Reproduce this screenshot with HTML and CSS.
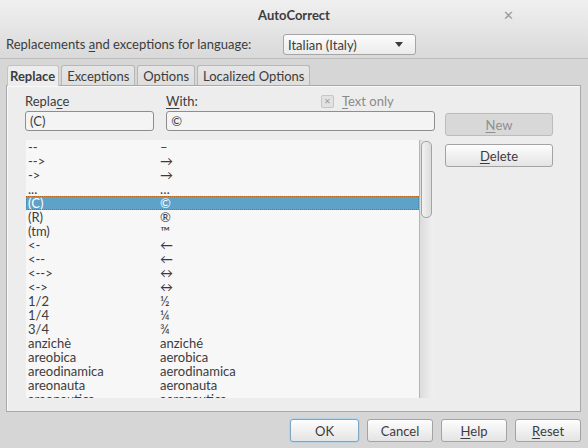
FILE: index.html
```html
<!DOCTYPE html>
<html>
<head>
<meta charset="utf-8">
<link rel="stylesheet" href="styles.css">
</head>
<body>
<div class="dialog">
  <div class="header">
    <div class="titlebar">
      <span class="title">AutoCorrect</span>
      <span class="close">✕</span>
    </div>
    <div class="langrow">
      <span class="langlabel">Replacements <u>a</u>nd exceptions for language:</span>
      <div class="combo"><span>Italian (Italy)</span><span class="arrow"></span></div>
    </div>
  </div>
  <div class="tabs">
    <div class="tab active">Replace</div>
    <div class="tab">Exceptions</div>
    <div class="tab">Options</div>
    <div class="tab">Localized Options</div>
  </div>
  <div class="panel">
    <div class="leftcol">
      <div class="labels">
        <span class="lbl-replace">Repla<u>c</u>e</span>
        <span class="lbl-with"><u>W</u>ith:</span>
        <span class="textonly"><span class="check">✕</span><span><u>T</u>ext only</span></span>
      </div>
      <div class="inputs">
        <div class="input in-replace">(C)</div>
        <div class="input in-with">©</div>
      </div>
      <div class="listbox">
        <div class="rows">
          <div class="row"><span class="c1">--</span><span>–</span></div>
          <div class="row"><span class="c1">--&gt;</span><span>→</span></div>
          <div class="row"><span class="c1">-&gt;</span><span>→</span></div>
          <div class="row"><span class="c1">...</span><span>…</span></div>
          <div class="row sel"><span class="c1">(C)</span><span>©</span></div>
          <div class="row"><span class="c1">(R)</span><span>®</span></div>
          <div class="row"><span class="c1">(tm)</span><span>™</span></div>
          <div class="row"><span class="c1">&lt;-</span><span>←</span></div>
          <div class="row"><span class="c1">&lt;--</span><span>←</span></div>
          <div class="row"><span class="c1">&lt;--&gt;</span><span>↔</span></div>
          <div class="row"><span class="c1">&lt;-&gt;</span><span>↔</span></div>
          <div class="row"><span class="c1">1/2</span><span>½</span></div>
          <div class="row"><span class="c1">1/4</span><span>¼</span></div>
          <div class="row"><span class="c1">3/4</span><span>¾</span></div>
          <div class="row"><span class="c1">anzichè</span><span>anziché</span></div>
          <div class="row"><span class="c1">areobica</span><span>aerobica</span></div>
          <div class="row"><span class="c1">areodinamica</span><span>aerodinamica</span></div>
          <div class="row"><span class="c1">areonauta</span><span>aeronauta</span></div>
          <div class="row"><span class="c1">areonautica</span><span>aeronautica</span></div>
        </div>
        <div class="scrollbar"><div class="thumb"></div></div>
      </div>
    </div>
    <div class="rightcol">
      <div class="btn disabled"><u>N</u>ew</div>
      <div class="btn"><u>D</u>elete</div>
    </div>
  </div>
  <div class="footer">
    <div class="btn fbtn default">OK</div>
    <div class="btn fbtn">Cancel</div>
    <div class="btn fbtn"><u>H</u>elp</div>
    <div class="btn fbtn"><u>R</u>eset</div>
  </div>
</div>
</body>
</html>
```
FILE: styles.css
```css
html, body {
  margin: 0;
  padding: 0;
}
body {
  width: 588px;
  height: 448px;
  overflow: hidden;
  background: #d6d6d6;
  font-family: "Lato", "Open Sans", sans-serif;
  font-size: 13px;
  color: #3c3c3c;
}
u { text-decoration: underline; text-underline-offset: 2px; }
.dialog {
  width: 588px;
  height: 448px;
  display: flex;
  flex-direction: column;
}
.header {
  height: 58px;
  background: linear-gradient(#f0f0f0, #d9d9d9);
  border-bottom: 1px solid #bdbdbd;
}
.titlebar {
  height: 30px;
  display: flex;
  align-items: center;
  justify-content: center;
  position: relative;
}
.title {
  font-weight: bold;
  font-size: 13px;
}
.close {
  position: absolute;
  left: 503px;
  top: 7px;
  font-size: 13px;
  color: #9a9a9a;
}
.langrow {
  height: 28px;
  display: flex;
  align-items: center;
  padding-left: 6px;
}
.langlabel {
  width: 277px;
}
.combo {
  width: 115px;
  height: 19px;
  border: 1px solid #a5a5a5;
  border-radius: 3px;
  background: linear-gradient(#fbfbfb, #ebebeb);
  display: flex;
  align-items: center;
  justify-content: space-between;
  padding: 0 12px 0 4px;
  box-sizing: content-box;
  margin-top: 1px;
}
.arrow {
  width: 0;
  height: 0;
  border-left: 4px solid transparent;
  border-right: 4px solid transparent;
  border-top: 5px solid #3c3c3c;
}
.tabs {
  display: flex;
  gap: 2px;
  padding-left: 7px;
  margin-top: 6px;
  height: 20px;
}
.tab {
  height: 19px;
  padding: 0 5px;
  border: 1px solid #b7b7b7;
  border-bottom: none;
  border-radius: 3px 3px 0 0;
  background: linear-gradient(#e6e6e6, #dedede);
  display: flex;
  align-items: center;
}
.tab.active {
  background: #ededed;
  font-weight: bold;
  height: 20px;
  position: relative;
  z-index: 1;
  padding: 0 3px 0 2px;
  border-color: #c4c4c4;
}
.panel {
  margin-left: 6px;
  width: 573px;
  height: 325px;
  border: 1px solid #a9a9a9;
  background: #ededed;
  display: flex;
  box-shadow: inset 1px 1px 0 #f8f8f8;
}
.leftcol {
  margin-left: 18px;
  width: 410px;
  display: flex;
  flex-direction: column;
}
.labels {
  height: 18px;
  margin-top: 6px;
  display: flex;
  align-items: center;
  position: relative;
}
.lbl-replace { width: 141px; }
.lbl-with { width: 155px; }
.textonly {
  display: flex;
  align-items: center;
  gap: 8px;
  color: #8a8a8a;
}
.check {
  width: 11px;
  height: 11px;
  border: 1px solid #c6c6c6;
  border-radius: 2px;
  background: #e2e2e2;
  font-size: 8px;
  line-height: 11px;
  text-align: center;
  color: #9a9a9a;
}
.inputs {
  display: flex;
  gap: 12px;
  margin-top: 1px;
}
.input {
  height: 18px;
  border: 1px solid #8e8e8e;
  border-radius: 3px;
  background: #f4f4f4;
  display: flex;
  align-items: center;
  padding-left: 4px;
  box-sizing: content-box;
}
.in-replace { width: 124px; }
.in-with { width: 264px; }
.listbox {
  margin-top: 9px;
  margin-left: 1px;
  width: 407px;
  height: 258px;
  display: flex;
  background: #f7f7f7;
  overflow: hidden;
}
.rows {
  flex: 1;
  overflow: hidden;
}
.row {
  height: 14px;
  line-height: 14px;
  display: flex;
  padding-left: 2px;
  white-space: nowrap;
}
.row .c1 { width: 132px; }
.row.sel {
  background: #5fa2c8;
  color: #ffffff;
  outline: 1px dotted #b5651d;
  outline-offset: -1px;
}
.scrollbar {
  width: 13px;
  border-left: 1px solid #b5b5b5;
  background: linear-gradient(90deg, #dcdcdc, #f0f0f0);
  position: relative;
}
.thumb {
  margin: 1px 0 0 1px;
  width: 9px;
  height: 75px;
  border: 1px solid #a3a3a3;
  border-radius: 5px;
  background: linear-gradient(90deg, #f2f2f2, #dcdcdc);
}
.rightcol {
  margin-left: 10px;
  padding-top: 27px;
  display: flex;
  flex-direction: column;
  gap: 8px;
}
.btn {
  width: 106px;
  height: 21px;
  border: 1px solid #a3a3a3;
  border-radius: 3px;
  background: linear-gradient(#fdfdfd, #e4e4e4);
  display: flex;
  align-items: center;
  justify-content: center;
}
.btn.disabled {
  background: #d8d8d8;
  border-color: #bcbcbc;
  color: #8f8f8f;
}
.footer {
  display: flex;
  gap: 8px;
  justify-content: flex-end;
  padding-right: 7px;
  margin-top: 7px;
}
.fbtn {
  width: 64px;
}
.fbtn.default {
  width: 67px;
  border-color: #7aa6c8;
  box-shadow: 0 0 0 1px #b9d3e6;
}
```
